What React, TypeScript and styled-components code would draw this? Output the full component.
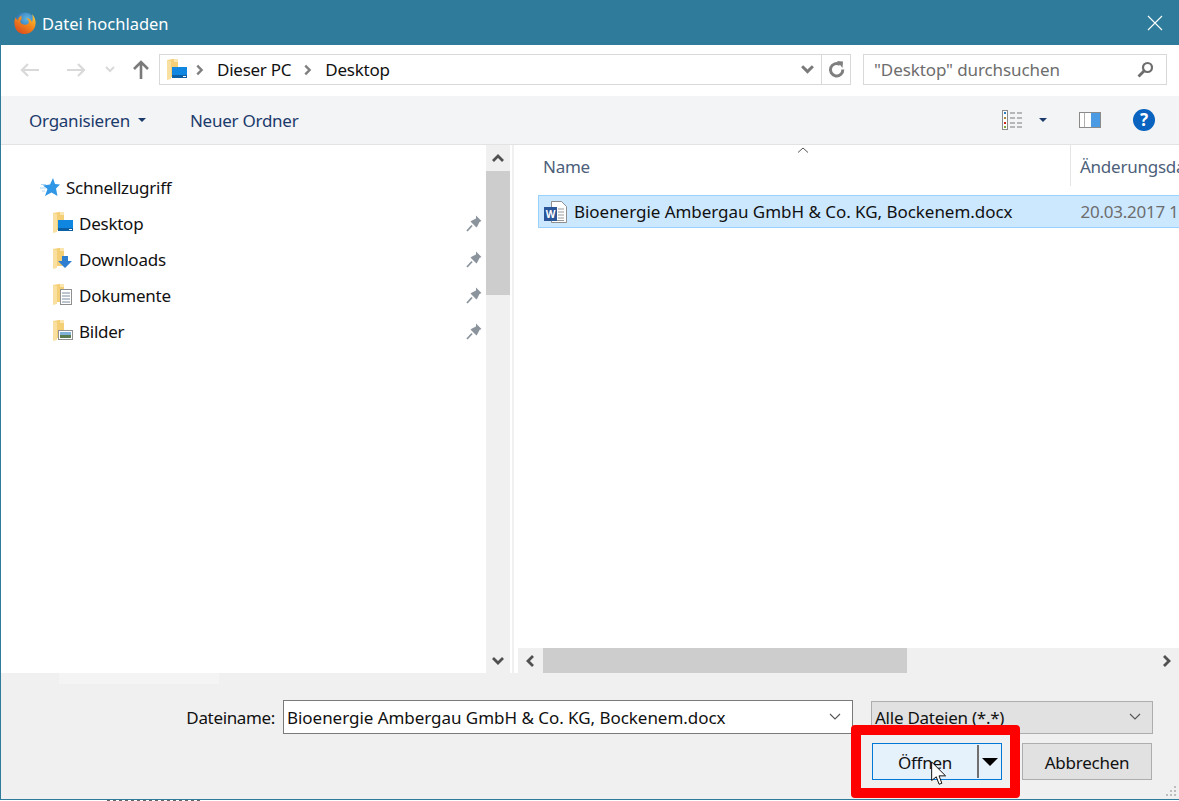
import React from 'react'
import styled, { createGlobalStyle } from 'styled-components'

const GlobalStyle = createGlobalStyle`
  html, body {
    margin: 0;
    padding: 0;
    background: #fff;
    overflow: hidden;
  }
  * {
    box-sizing: border-box;
  }
`

const Window = styled.div`
  position: relative;
  display: flex;
  flex-direction: column;
  width: 1179px;
  height: 800px;
  border-left: 1px solid #2e7b9b;
  border-bottom: 1px solid #2e7b9b;
  font-family: 'Noto Sans', 'Open Sans', sans-serif;
  font-size: 17px;
  letter-spacing: -0.25px;
  color: #111;
  overflow: hidden;
`

const PageBehind = styled.div`
  width: 96px;
  height: 1px;
  margin-left: 107px;
  background: repeating-linear-gradient(90deg, #666 0 3px, transparent 3px 6px);
`

const TitleBar = styled.div`
  display: flex;
  align-items: center;
  flex: 0 0 45px;
  margin-left: -1px;
  padding: 0 16px 0 13px;
  gap: 5px;
  background: #2e7b9b;
  color: #fff;
`

const TitleText = styled.span`
  flex: 1;
  padding-top: 2px;
  font-size: 16.5px;
  letter-spacing: 0;
`

const NavBar = styled.div`
  display: flex;
  align-items: center;
  flex: 0 0 51px;
  padding: 0 0 2px 19px;
  background: #fff;
`

const NavIcon = styled.svg`
  flex: none;
`

const AddressBox = styled.div`
  display: flex;
  align-items: center;
  width: 692px;
  height: 31px;
  margin-left: 9px;
  padding-left: 6px;
  border: 1px solid #d9d9d9;
`

const FolderSlot = styled.span`
  display: flex;
  margin-right: 5px;
`

const Crumb = styled.span`
  margin: 0 10px 0 12px;
  padding-bottom: 1px;
`

const AddressEnd = styled.div`
  display: flex;
  align-items: center;
  height: 100%;
  margin-left: auto;
`

const RefreshCell = styled.div`
  display: flex;
  align-items: center;
  justify-content: center;
  width: 29px;
  height: 100%;
  margin-left: 6px;
  border-left: 1px solid #d9d9d9;
`

const SearchBox = styled.div`
  display: flex;
  align-items: center;
  justify-content: space-between;
  width: 304px;
  height: 31px;
  margin-left: 12px;
  padding: 0 12px 1px 10px;
  border: 1px solid #d9d9d9;
  color: #6d6d6d;
  letter-spacing: -0.1px;
`

const ToolBar = styled.div`
  display: flex;
  align-items: center;
  flex: 0 0 49px;
  padding: 0 23px 0 28px;
  background: #f3f4f6;
  border-bottom: 1px solid #e3e3e3;
  color: #1b3a6b;
`

const ToolButton = styled.span`
  display: flex;
  align-items: center;
  gap: 8px;
  margin-right: 44px;
`

const ToolIcons = styled.div`
  display: flex;
  align-items: center;
  margin-left: auto;
`

const Main = styled.div`
  display: flex;
  flex: 1;
  min-height: 0;
`

const Sidebar = styled.div`
  display: flex;
  flex: 0 0 485px;
  flex-direction: column;
  padding: 24px 0 0 39px;
`

const TreeHead = styled.div`
  display: flex;
  align-items: center;
  gap: 6px;
  height: 36px;
`

const TreeRow = styled.div`
  display: flex;
  align-items: center;
  height: 36px;
  margin-left: 12px;
  gap: 5px;
`

const PinSlot = styled.span`
  display: flex;
  margin-left: auto;
  margin-right: 4px;
`

const VScroll = styled.div`
  display: flex;
  flex: 0 0 24px;
  flex-direction: column;
  background: #f0f0f0;
`

const ScrollArrow = styled.div`
  display: flex;
  align-items: center;
  justify-content: center;
  flex: 0 0 ${({ $size }: { $size: number }) => $size}px;
  background: #f0f0f0;
`

const VThumb = styled.div`
  flex: 0 0 124px;
  background: #cdcdcd;
`

const VTrack = styled.div`
  flex: 1;
`

const Splitter = styled.div`
  flex: 0 0 8px;
  background: #f0f0f0;
  border-left: 2px solid #fff;
  border-right: 4px solid #fff;
`

const FilePane = styled.div`
  position: relative;
  display: flex;
  flex: 1;
  flex-direction: column;
  min-width: 0;
  overflow: hidden;
`

const SortCaret = styled.svg`
  position: absolute;
  top: 2px;
  left: 279px;
`

const HeaderRow = styled.div`
  display: flex;
  flex: 0 0 41px;
  color: #4c607a;
`

const HeaderCell = styled.div`
  display: flex;
  align-items: center;
  padding-top: 2px;
  padding-left: ${({ $pad }: { $pad: number; $width: number }) => $pad}px;
  flex: 0 0 ${({ $width }: { $width: number; $pad: number }) => $width}px;
  white-space: nowrap;
  & + & {
    border-left: 1px solid #e5e5e5;
  }
`

const FileList = styled.div`
  flex: 1;
  padding: 9px 0 0 20px;
`

const FileRow = styled.div`
  display: flex;
  align-items: center;
  width: 700px;
  height: 33px;
  padding-left: 5px;
  gap: 6px;
  background: #cce8ff;
  border: 1px solid #99d1ff;
  white-space: nowrap;
`

const FileName = styled.span`
  letter-spacing: -0.04px;
`

const FileDate = styled.span`
  margin-left: 62px;
  color: #6d6d6d;
`

const HScroll = styled.div`
  display: flex;
  flex: 0 0 25px;
  background: #f0f0f0;
`

const HThumb = styled.div`
  flex: 0 0 364px;
  background: #cdcdcd;
`

const HTrack = styled.div`
  flex: 1;
`

const Footer = styled.div`
  position: relative;
  display: flex;
  flex: 0 0 126px;
  flex-direction: column;
  align-items: flex-end;
  padding: 27px 26px 0 0;
  background: #f0f0f0;
`

const Smudge = styled.div`
  position: absolute;
  top: 0;
  left: 58px;
  width: 160px;
  height: 11px;
  background: #f4f4f4;
`

const FieldRow = styled.div`
  display: flex;
  align-items: center;
`

const FieldLabel = styled.span`
  margin-right: 8px;
  letter-spacing: -0.35px;
`

const NameInput = styled.div`
  display: flex;
  align-items: center;
  justify-content: space-between;
  width: 570px;
  height: 34px;
  padding: 0 11px 0 3px;
  background: #fff;
  border: 1px solid #7a7a7a;
  white-space: nowrap;
`

const TypeSelect = styled.div`
  display: flex;
  align-items: center;
  justify-content: space-between;
  width: 282px;
  height: 33px;
  margin-left: 18px;
  padding: 0 11px 0 3px;
  background: #e1e1e1;
  border: 1px solid #adadad;
`

const ButtonRow = styled.div`
  display: flex;
  margin: 9px 1px 0 0;
`

const OpenButton = styled.div`
  display: flex;
  align-items: center;
  width: 130px;
  height: 37px;
  background: #e5f1fb;
  border: 1px solid #0078d7;
`

const OpenLabel = styled.span`
  flex: 1;
  padding-top: 2px;
  text-align: center;
`

const OpenDivider = styled.span`
  flex: none;
  width: 2px;
  height: 33px;
  background: #707070;
`

const OpenCaret = styled.span`
  flex: 0 0 22px;
  display: flex;
  justify-content: center;
`

const CancelButton = styled.div`
  display: flex;
  align-items: center;
  justify-content: center;
  width: 130px;
  height: 37px;
  margin-left: 20px;
  padding-top: 2px;
  background: #e1e1e1;
  border: 1px solid #adadad;
`

const Highlight = styled.div`
  position: absolute;
  left: 850px;
  top: 725px;
  width: 169px;
  height: 73px;
  border: 10px solid #ff0000;
  border-radius: 4px;
  pointer-events: none;
`

const Cursor = styled.svg`
  position: absolute;
  left: 929px;
  top: 761px;
`

const Grip = styled.svg`
  position: absolute;
  right: 2px;
  bottom: 2px;
`

const Folder = ({ children }: { children?: React.ReactNode }) => (
  <NavIcon width="22" height="24" viewBox="0 0 22 24">
    <path d="M1 2l6-1h5v18H4l-3 2z" fill="#f5cf75" />
    <path d="M1 2l4 1v18l-4 1z" fill="#f9e0a0" />
    <path d="M8 1h4v3H8z" fill="#fbe6b0" />
    {children}
  </NavIcon>
)

const DesktopBadge = () => (
  <>
    <rect x="6" y="9" width="15" height="11" fill="#0f86e0" />
    <rect x="6" y="17" width="15" height="3" fill="#0b5fa5" />
    <rect x="17" y="18" width="3" height="1" fill="#fff" />
  </>
)

const Pin = () => (
  <svg width="16" height="17" viewBox="0 0 16 17">
    <path d="M10 0.5l5.5 5.5-2 1-2 4-1 1.5-6-6 1.5-1 4-2z" fill="#8b949c" />
    <path d="M6 10.5L1 16" stroke="#8b949c" strokeWidth="1.8" />
  </svg>
)

const Chevron = ({ dir, color = '#606060', size = 14 }: { dir: string; color?: string; size?: number }) => {
  const points: Record<string, string> = {
    up: 'M2 10l5-5 5 5',
    down: 'M2 4l5 5 5-5',
    left: 'M9 2L4 7l5 5',
    right: 'M5 2l5 5-5 5',
  }
  return (
    <svg width={size} height={size} viewBox="0 0 14 14">
      <path d={points[dir]} fill="none" stroke={color} strokeWidth="2.8" />
    </svg>
  )
}

const ThinChevron = () => (
  <svg width="12" height="8" viewBox="0 0 12 8">
    <path d="M1 1l5 5 5-5" fill="none" stroke="#555" strokeWidth="1.1" />
  </svg>
)

const Caret = ({ w = 8, h = 4, color = '#1b3a6b' }: { w?: number; h?: number; color?: string }) => (
  <svg width={w} height={h} viewBox="0 0 8 4" preserveAspectRatio="none">
    <path d="M0 0h8L4 4z" fill={color} />
  </svg>
)

const Firefox = () => (
  <svg width="24" height="24" viewBox="0 0 24 24">
    <defs>
      <radialGradient id="ffGlobe" cx="0.6" cy="0.3" r="0.8">
        <stop offset="0" stopColor="#5cb6e4" />
        <stop offset="1" stopColor="#1d4d9b" />
      </radialGradient>
      <linearGradient id="ffFox" x1="0.9" y1="0" x2="0.2" y2="1">
        <stop offset="0" stopColor="#fbd23a" />
        <stop offset="0.45" stopColor="#f38a1d" />
        <stop offset="1" stopColor="#d9491c" />
      </linearGradient>
    </defs>
    <circle cx="12" cy="12" r="10.5" fill="url(#ffGlobe)" />
    <path
      d="M19 3C24 8 24 17 18 21C12 25 4 23 2 16C1 12 1 9 3 6C3 8 4 9 5 9C5 7 7 5 9 4.5C8 6 8 7 9 8C7 9 7 11 8 12C9 14 13 14 15 13C17 11 15 8 13 7C16 7 18 9 19 11C20 8 20 5 19 3Z"
      fill="url(#ffFox)"
    />
  </svg>
)

const App = () => (
  <>
    <GlobalStyle />
    <Window>
      <TitleBar>
        <Firefox />
        <TitleText>Datei hochladen</TitleText>
        <svg width="16" height="16" viewBox="0 0 16 16">
          <path d="M1 1l14 14M15 1L1 15" stroke="#fff" strokeWidth="1.1" />
        </svg>
      </TitleBar>

      <NavBar>
        <NavIcon width="20" height="16" viewBox="0 0 20 16">
          <path d="M1 8h18M8 2L2 8l6 6" fill="none" stroke="#d9d9d9" strokeWidth="2.2" />
        </NavIcon>
        <NavIcon width="20" height="16" viewBox="0 0 20 16" style={{ marginLeft: 26 }}>
          <path d="M1 8h18M12 2l6 6-6 6" fill="none" stroke="#d9d9d9" strokeWidth="2.2" />
        </NavIcon>
        <NavIcon width="10" height="8" viewBox="0 0 10 8" style={{ marginLeft: 19 }}>
          <path d="M1 1l4 4 4-4" fill="none" stroke="#d9d9d9" strokeWidth="2" />
        </NavIcon>
        <NavIcon width="18" height="20" viewBox="0 0 18 20" style={{ marginLeft: 17 }}>
          <path d="M9 19V3M2 9l7-7 7 7" fill="none" stroke="#7a7a7a" strokeWidth="2.6" />
        </NavIcon>
        <AddressBox>
          <FolderSlot>
            <Folder>
              <DesktopBadge />
            </Folder>
          </FolderSlot>
          <Chevron dir="right" color="#7f7f7f" size={12} />
          <Crumb>Dieser PC</Crumb>
          <Chevron dir="right" color="#7f7f7f" size={12} />
          <Crumb>Desktop</Crumb>
          <AddressEnd>
            <Chevron dir="down" color="#7a7a7a" size={15} />
            <RefreshCell>
              <svg width="17" height="17" viewBox="0 0 17 17">
                <path d="M12 3.6A6.2 6.2 0 1 0 14.8 8.5" fill="none" stroke="#7f7f7f" strokeWidth="3" />
                <path d="M9 0l6 .5-.5 6.5z" fill="#7f7f7f" />
              </svg>
            </RefreshCell>
          </AddressEnd>
        </AddressBox>
        <SearchBox>
          <span>"Desktop" durchsuchen</span>
          <svg width="17" height="17" viewBox="0 0 17 17">
            <circle cx="10.5" cy="6.5" r="4.5" fill="none" stroke="#6d6d6d" strokeWidth="2.2" />
            <path d="M7 10l-5.5 5.5" stroke="#6d6d6d" strokeWidth="2.8" />
          </svg>
        </SearchBox>
      </NavBar>

      <ToolBar>
        <ToolButton>
          Organisieren
          <Caret />
        </ToolButton>
        <ToolButton>Neuer Ordner</ToolButton>
        <ToolIcons>
          <svg width="22" height="20" viewBox="0 0 22 20">
            <rect x="0.5" y="0.5" width="5" height="19" fill="#fff" stroke="#8a8a8a" />
            <rect x="2" y="2" width="2" height="2" fill="#2f7fc1" />
            <rect x="2" y="7" width="2" height="2" fill="#a88a3a" />
            <rect x="2" y="12" width="2" height="2" fill="#c8281e" />
            <rect x="2" y="16" width="2" height="2" fill="#7fa53a" />
            <path d="M8 3h5M15 3h5M8 8h5M15 8h5M8 13h5M15 13h5M8 17h5M15 17h5" stroke="#7a7a7a" />
          </svg>
          <NavIcon width="8" height="4" viewBox="0 0 8 4" style={{ marginLeft: 15 }}>
            <path d="M0 0h8L4 4z" fill="#1b3a6b" />
          </NavIcon>
          <svg width="22" height="16" viewBox="0 0 22 16" style={{ marginLeft: 32 }}>
            <rect x="0.5" y="0.5" width="21" height="15" fill="#fff" stroke="#8a8a8a" />
            <rect x="12" y="1" width="9" height="14" fill="#4a9be3" />
            <path d="M5.5 1v14" stroke="#b0b0b0" />
          </svg>
          <svg width="24" height="24" viewBox="0 0 24 24" style={{ marginLeft: 31 }}>
            <circle cx="12" cy="12" r="11" fill="#0a63bf" />
            <text
              x="12"
              y="18"
              textAnchor="middle"
              fontSize="17"
              fontWeight="700"
              fontFamily="Noto Sans, sans-serif"
              fill="#fff"
            >
              ?
            </text>
          </svg>
        </ToolIcons>
      </ToolBar>

      <Main>
        <Sidebar>
          <TreeHead>
            <svg width="20" height="19" viewBox="0 0 20 19">
              <path d="M13 0L15 6L20 6.5L16 10.5L17.5 18L11.5 14.5L5 18L7.5 11L3 7.5L10 6.5Z" fill="#2f97e6" />
              <path d="M1 6.5h5M0 10h6M2 13h3" stroke="#a9d6f5" />
            </svg>
            Schnellzugriff
          </TreeHead>
          <TreeRow>
            <Folder>
              <DesktopBadge />
            </Folder>
            Desktop
            <PinSlot>
              <Pin />
            </PinSlot>
          </TreeRow>
          <TreeRow>
            <Folder>
              <path d="M10 9h6v5h4l-7 7-7-7h4z" fill="#2f7fd1" />
            </Folder>
            Downloads
            <PinSlot>
              <Pin />
            </PinSlot>
          </TreeRow>
          <TreeRow>
            <Folder>
              <rect x="8.5" y="6.5" width="11" height="15" fill="#fff" stroke="#8f8f8f" />
              <path d="M10 10h8M10 13h8M10 16h8M10 19h8" stroke="#7a8aa0" />
            </Folder>
            Dokumente
            <PinSlot>
              <Pin />
            </PinSlot>
          </TreeRow>
          <TreeRow>
            <Folder>
              <rect x="6.5" y="11.5" width="14" height="9" fill="#fff" stroke="#8f8f8f" />
              <rect x="8" y="13" width="11" height="3" fill="#7fb0d8" />
              <rect x="8" y="16" width="11" height="3" fill="#5a7a50" />
            </Folder>
            Bilder
            <PinSlot>
              <Pin />
            </PinSlot>
          </TreeRow>
        </Sidebar>

        <VScroll>
          <ScrollArrow $size={26}>
            <Chevron dir="up" color="#505050" />
          </ScrollArrow>
          <VThumb />
          <VTrack />
          <ScrollArrow $size={25}>
            <Chevron dir="down" color="#505050" />
          </ScrollArrow>
        </VScroll>
        <Splitter />

        <FilePane>
          <SortCaret width="12" height="6" viewBox="0 0 12 6">
            <path d="M1 5.5L6 1l5 4.5" fill="none" stroke="#555" />
          </SortCaret>
          <HeaderRow>
            <HeaderCell $pad={25} $width={552}>
              Name
            </HeaderCell>
            <HeaderCell $pad={9} $width={200}>
              Änderungsdatum
            </HeaderCell>
          </HeaderRow>
          <FileList>
            <FileRow>
              <svg width="24" height="24" viewBox="0 0 24 24">
                <path d="M7.5 1.5h10l5 5v16h-15z" fill="#fff" stroke="#8f8f8f" />
                <path d="M14 9h6M14 12h6M14 15h6M14 18h6M10 20.5h10" stroke="#9a9a9a" />
                <rect x="0" y="7" width="13" height="14" fill="#2b579a" />
                <text
                  x="6.5"
                  y="17.5"
                  textAnchor="middle"
                  fontSize="10"
                  fontWeight="700"
                  fontFamily="Noto Sans, sans-serif"
                  fill="#fff"
                >
                  W
                </text>
              </svg>
              <FileName>Bioenergie Ambergau GmbH &amp; Co. KG, Bockenem.docx</FileName>
              <FileDate>20.03.2017 1</FileDate>
            </FileRow>
          </FileList>
          <HScroll>
            <ScrollArrow $size={25}>
              <Chevron dir="left" color="#505050" />
            </ScrollArrow>
            <HThumb />
            <HTrack />
            <ScrollArrow $size={27}>
              <Chevron dir="right" color="#505050" />
            </ScrollArrow>
          </HScroll>
        </FilePane>
      </Main>

      <Footer>
        <Smudge />
        <FieldRow>
          <FieldLabel>Dateiname:</FieldLabel>
          <NameInput>
            <FileName>Bioenergie Ambergau GmbH &amp; Co. KG, Bockenem.docx</FileName>
            <ThinChevron />
          </NameInput>
          <TypeSelect>
            Alle Dateien (*.*)
            <ThinChevron />
          </TypeSelect>
        </FieldRow>
        <ButtonRow>
          <OpenButton>
            <OpenLabel>Öffnen</OpenLabel>
            <OpenDivider />
            <OpenCaret>
              <Caret w={16} h={8} color="#000" />
            </OpenCaret>
          </OpenButton>
          <CancelButton>Abbrechen</CancelButton>
        </ButtonRow>
        <Grip width="12" height="12" viewBox="0 0 12 12">
          <path d="M9 1h2v2H9zM5 5h2v2H5zM9 5h2v2H9zM1 9h2v2H1zM5 9h2v2H5zM9 9h2v2H9z" fill="#bdbdbd" />
        </Grip>
      </Footer>

      <Highlight />
      <Cursor width="20" height="26" viewBox="0 0 20 28">
        <path d="M1 1v20l5-4 3 8 3-1-3-8h7z" fill="#fff" stroke="#000" strokeWidth="1" />
      </Cursor>
    </Window>
    <PageBehind />
  </>
)

export default App
